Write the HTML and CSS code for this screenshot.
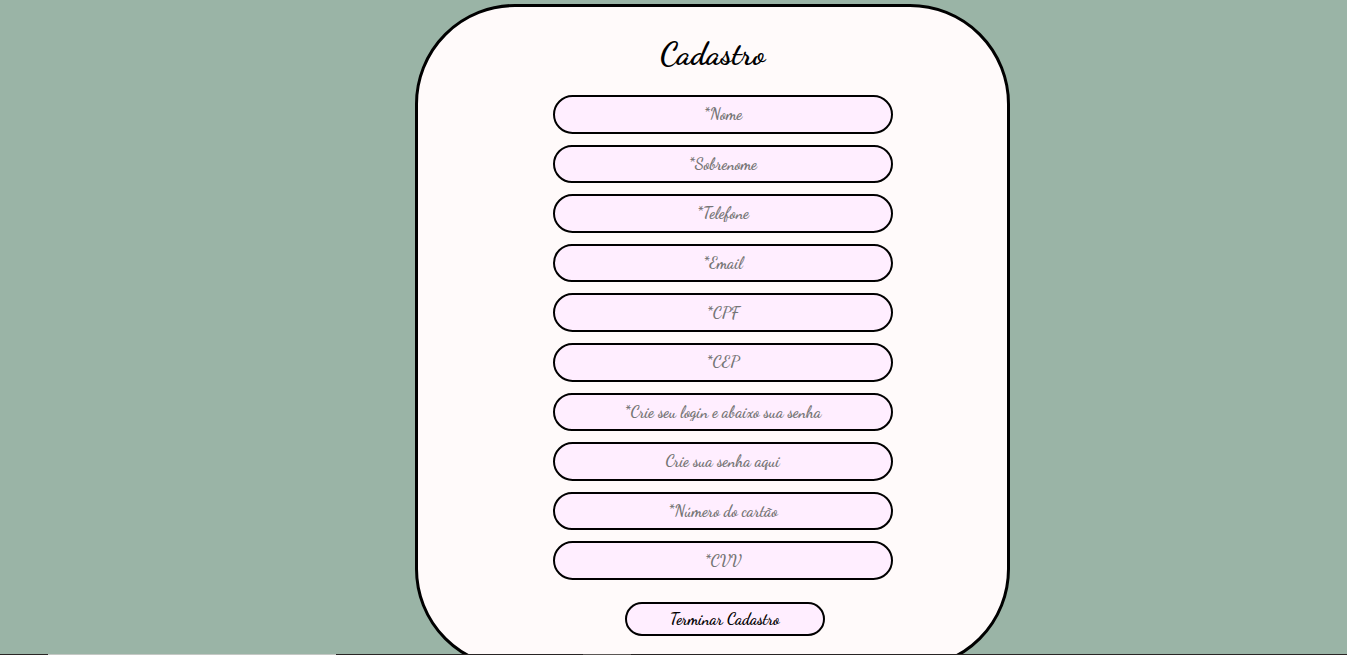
FILE: index.html
```html
<!DOCTYPE html>
<html lang="pt-BR">
<head>
<meta charset="utf-8">
<meta name="viewport" content="width=device-width, initial-scale=1">
<title>Cadastro</title>
<link rel="stylesheet" href="styles.css">
</head>
<body>
<main class="card">
  <h1 class="title">Cadastro</h1>
  <form class="form">
    <div class="fields">
      <input class="field" type="text" name="nome" aria-label="Nome" placeholder="*Nome">
      <input class="field" type="text" name="sobrenome" aria-label="Sobrenome" placeholder="*Sobrenome">
      <input class="field" type="tel" name="telefone" aria-label="Telefone" placeholder="*Telefone">
      <input class="field" type="email" name="email" aria-label="Email" placeholder="*Email">
      <input class="field" type="text" name="cpf" aria-label="CPF" placeholder="*CPF">
      <input class="field" type="text" name="cep" aria-label="CEP" placeholder="*CEP">
      <input class="field" type="text" name="login" aria-label="Login" placeholder="*Crie seu login e abaixo sua senha">
      <input class="field" type="password" name="senha" aria-label="Senha" placeholder="Crie sua senha aqui">
      <input class="field" type="text" name="cartao" aria-label="Número do cartão" placeholder="*Número do cartão">
      <input class="field" type="text" name="cvv" aria-label="CVV" placeholder="*CVV">
    </div>
    <button class="submit" type="submit">Terminar Cadastro</button>
  </form>
</main>
<div class="edge"></div>
</body>
</html>
```
FILE: styles.css
```css
* {
  box-sizing: border-box;
}

html {
  scrollbar-width: none;
}

body {
  margin: 0;
  padding: 4px 25vw 0 30.8vw;
  min-height: 100vh;
  background: #9ab4a6;
  font-family: "Dancing Script", "Liberation Serif", cursive;
  font-weight: 700;
}

.card {
  padding: 25px 20px 30px;
  border: 3px solid #000;
  border-radius: 100px;
  background: #fffafa;
}

.title {
  margin: 0 0 19px;
  font-size: 32px;
  line-height: 44px;
  text-align: center;
}

.form {
  display: flex;
  flex-direction: column;
  align-items: center;
  gap: 22px;
  padding-left: 20px;
}

.fields {
  display: grid;
  grid-auto-rows: 1fr;
  gap: 11px;
  width: 100%;
  max-width: 340px;
  min-height: 485px;
}

.field,
.submit {
  border: 2px solid #000;
  border-radius: 20px;
  background: #ffeeff;
  color: #000;
  font: inherit;
  font-size: 16px;
  text-align: center;
}

.field {
  width: 100%;
  min-width: 0;
  padding: 0 12px 1px;
}

.field::placeholder {
  color: #757575;
}

.submit {
  width: 200px;
  height: 34px;
  margin-left: 4px;
  padding: 0 0 2px;
}

.edge {
  position: fixed;
  right: 0;
  bottom: 0;
  left: 0;
  height: 1px;
  background: linear-gradient(to right, #292524 48px, #c4c8c4 48px 336px, #292524 336px 583px, #5b5755 583px 631px, #292524 631px);
}
```
